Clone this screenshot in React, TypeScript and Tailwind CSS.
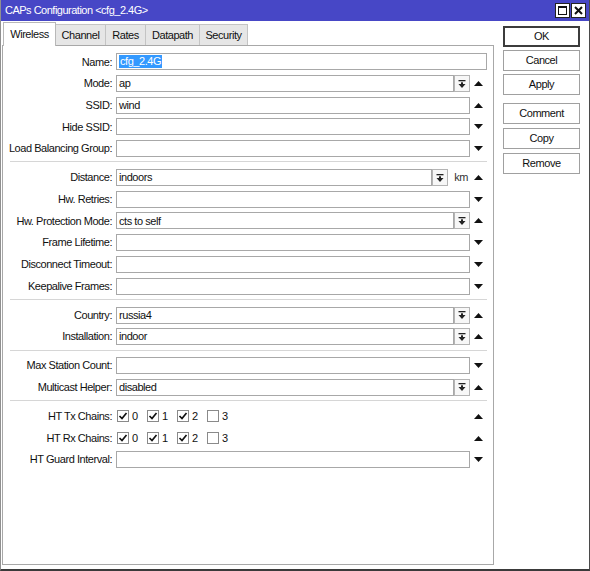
type ArrowDir = "up" | "down" | "none";

function Arrow({ dir }: { dir: ArrowDir }) {
  return (
    <div className="flex w-[17px] shrink-0 justify-center">
      {dir !== "none" && (
        <svg width="9" height="5" viewBox="0 0 9 5">
          {dir === "up" ? (
            <path d="M0 5 L4.5 0 L9 5Z" fill="#111" />
          ) : (
            <path d="M0 0 L9 0 L4.5 5Z" fill="#111" />
          )}
        </svg>
      )}
    </div>
  );
}

function DropBtn() {
  return (
    <div className="flex h-[17px] w-[16px] shrink-0 items-center justify-center border border-[#b4b4b4] bg-[#f7f7f7]">
      <svg width="8" height="8" viewBox="0 0 8 8">
        <rect x="0.5" y="0" width="7" height="1.3" fill="#222" />
        <rect x="3" y="2.3" width="2" height="2" fill="#222" />
        <path d="M0.5 4 L7.5 4 L4 8Z" fill="#222" />
      </svg>
    </div>
  );
}

type RowProps = {
  label: string;
  value?: string;
  select?: boolean;
  arrow?: ArrowDir;
  unit?: string;
  selected?: boolean;
  noArrowCol?: boolean;
  children?: React.ReactNode;
};

function Row({ label, value, select, arrow = "down", unit, selected, noArrowCol, children }: RowProps) {
  return (
    <div className="flex h-[21.7px] items-center">
      <div className="w-[109px] shrink-0 whitespace-nowrap text-right">{label}:</div>
      <div className="ml-[4px] flex min-w-0 flex-1 items-center">
        {children ?? (
          <>
            <div className="flex h-[17px] min-w-0 flex-1 items-center border border-[#a8a8a8] bg-white px-[2px]">
              {selected ? (
                <span className="bg-[#3399ff] px-px leading-[13px] text-white">{value}</span>
              ) : (
                value
              )}
            </div>
            {select && <DropBtn />}
          </>
        )}
        {unit && <span className="ml-[6px] mr-[2px] text-[#333]">{unit}</span>}
      </div>
      {!noArrowCol && <Arrow dir={arrow} />}
    </div>
  );
}

function Check({ on, label }: { on: boolean; label: string }) {
  return (
    <div className="flex w-[30px] items-center gap-[3px]">
      <div className="flex h-[12px] w-[12px] items-center justify-center border border-[#8a8a8a] bg-white">
        {on && (
          <svg width="10" height="10" viewBox="0 0 10 10">
            <path d="M1.5 5 L4 7.5 L8.5 2" stroke="#111" strokeWidth="1.7" fill="none" />
          </svg>
        )}
      </div>
      <span>{label}</span>
    </div>
  );
}

function Sep() {
  return <div className="mb-[4.3px] ml-[7px] mt-[2px] h-px bg-[#d6d6d6]" />;
}

function Chains({ label }: { label: string }) {
  return (
    <Row label={label} arrow="up">
      <div className="ml-px flex items-center">
        <Check on label="0" />
        <Check on label="1" />
        <Check on label="2" />
        <Check on={false} label="3" />
      </div>
    </Row>
  );
}

function SideBtn({ label, main }: { label: string; main?: boolean }) {
  return (
    <div
      className={
        "flex h-[21px] w-[77px] items-center justify-center bg-white " +
        (main ? "border-2 border-[#3c3c3c]" : "border border-[#a0a0a0]")
      }
    >
      {label}
    </div>
  );
}

export default function App() {
  const tabs = ["Channel", "Rates", "Datapath", "Security"];
  return (
    <div className="flex h-[571px] w-[590px] flex-col border-b-2 border-l border-r border-b-[#3a3a3a] border-l-[#909090] border-r-[#4a4a4a] bg-white font-['Liberation_Sans',Arial,sans-serif] text-[11px] tracking-[-0.45px] text-[#111]">
      <div className="flex h-[21px] shrink-0 items-center justify-between bg-[#4747c6] pl-[4px] pr-[3px] text-white">
        <span className="tracking-[-0.5px]">CAPs Configuration &lt;cfg_2.4G&gt;</span>
        <div className="flex gap-[1px]">
          <div className="flex h-[15px] w-[15px] items-center justify-center border border-[#222] bg-white">
            <div className="h-[9px] w-[9px] border border-t-2 border-[#111]" />
          </div>
          <div className="flex h-[15px] w-[15px] items-center justify-center border border-[#222] bg-white">
            <svg width="9" height="9" viewBox="0 0 9 9">
              <path d="M1 1 L8 8 M8 1 L1 8" stroke="#111" strokeWidth="2" />
            </svg>
          </div>
        </div>
      </div>
      <div className="flex min-h-0 flex-1">
        <div className="ml-px flex w-[492px] flex-col pb-[4px]">
          <div className="flex h-[24px] items-end pl-[1px]">
            <div className="relative z-10 -mb-px flex h-[24px] w-[53px] items-center justify-center border border-b-0 border-[#b8b8b8] bg-white">
              Wireless
            </div>
            {tabs.map((t, i) => (
              <div
                key={t}
                className={
                  "flex h-[21px] items-center justify-center border border-b-0 border-l-0 border-[#c4c4c4] bg-[#e6e6e6] pt-[1px] " +
                  ["w-[50px]", "w-[40px]", "w-[54px]", "w-[48px]"][i]
                }
              >
                {t}
              </div>
            ))}
          </div>
          <div className="flex-1 border border-[#a8a8a8] bg-white pr-[6px] pt-[5px]">
            <Row label="Name" value="cfg_2.4G" selected noArrowCol />
            <Row label="Mode" value="ap" select arrow="up" />
            <Row label="SSID" value="wind" arrow="up" />
            <Row label="Hide SSID" />
            <Row label="Load Balancing Group" />
            <Sep />
            <Row label="Distance" value="indoors" select unit="km" arrow="up" />
            <Row label="Hw. Retries" />
            <Row label="Hw. Protection Mode" value="cts to self" select arrow="up" />
            <Row label="Frame Lifetime" />
            <Row label="Disconnect Timeout" />
            <Row label="Keepalive Frames" />
            <Sep />
            <Row label="Country" value="russia4" select arrow="up" />
            <Row label="Installation" value="indoor" select arrow="up" />
            <Sep />
            <Row label="Max Station Count" />
            <Row label="Multicast Helper" value="disabled" select arrow="up" />
            <Sep />
            <Chains label="HT Tx Chains" />
            <Chains label="HT Rx Chains" />
            <Row label="HT Guard Interval" />
          </div>
        </div>
        <div className="ml-[9px] flex flex-col pt-[5px]">
          <div className="flex flex-col gap-[3px]">
            <SideBtn label="OK" main />
            <SideBtn label="Cancel" />
            <SideBtn label="Apply" />
          </div>
          <div className="mt-[8px] flex flex-col gap-[4px]">
            <SideBtn label="Comment" />
            <SideBtn label="Copy" />
            <SideBtn label="Remove" />
          </div>
        </div>
      </div>
    </div>
  );
}
